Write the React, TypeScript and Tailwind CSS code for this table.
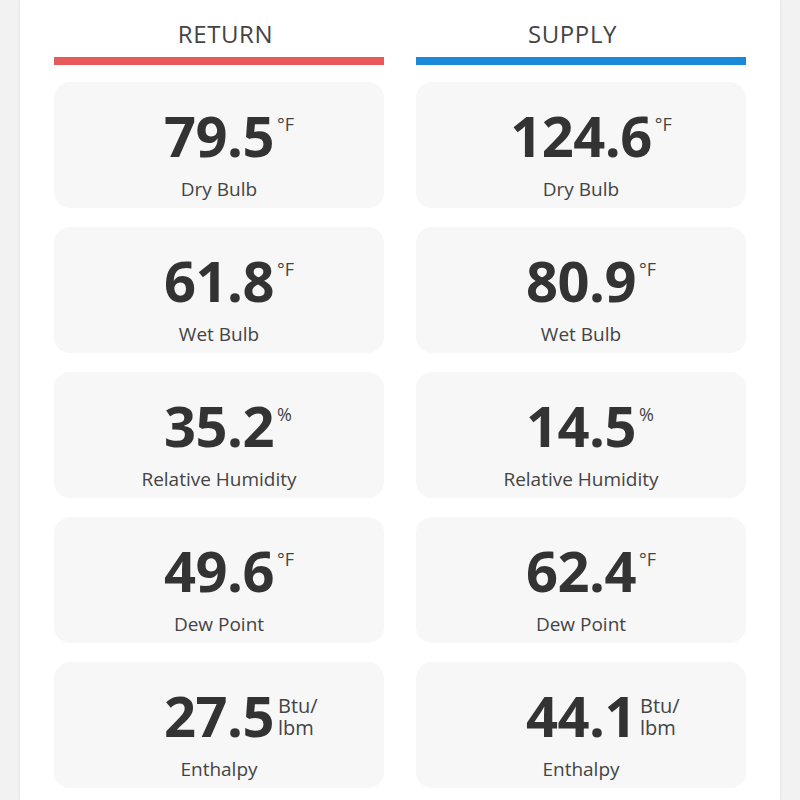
import React from 'react';

type Reading = { value: string; unit: string[]; label: string };

const RETURN: Reading[] = [
  { value: '79.5', unit: ['°F'], label: 'Dry Bulb' },
  { value: '61.8', unit: ['°F'], label: 'Wet Bulb' },
  { value: '35.2', unit: ['%'], label: 'Relative Humidity' },
  { value: '49.6', unit: ['°F'], label: 'Dew Point' },
  { value: '27.5', unit: ['Btu/', 'lbm'], label: 'Enthalpy' },
];

const SUPPLY: Reading[] = [
  { value: '124.6', unit: ['°F'], label: 'Dry Bulb' },
  { value: '80.9', unit: ['°F'], label: 'Wet Bulb' },
  { value: '14.5', unit: ['%'], label: 'Relative Humidity' },
  { value: '62.4', unit: ['°F'], label: 'Dew Point' },
  { value: '44.1', unit: ['Btu/', 'lbm'], label: 'Enthalpy' },
];

function Card({ r }: { r: Reading }) {
  const stacked = r.unit.length > 1;
  return (
    <div className="h-[126px] rounded-2xl bg-[#f7f7f7] pt-[25px] flex flex-col items-center">
      <div className="relative h-[56px] text-[56px] leading-none font-bold text-[#333] tracking-[-0.5px]">
        {r.value}
        <div
          className={
            stacked
              ? 'absolute left-full top-[8px] ml-[4px] text-[20px] leading-[22px] font-normal text-[#444] tracking-normal'
              : 'absolute left-full top-[6px] ml-[3px] text-[18px] leading-[22px] font-normal text-[#444] tracking-normal'
          }
        >
          {stacked ? (
            <>
              {r.unit[0]}
              <br />
              {r.unit[1]}
            </>
          ) : (
            r.unit[0]
          )}
        </div>
      </div>
      <div className="mt-[14px] text-[19px] leading-[24px] text-[#444]">{r.label}</div>
    </div>
  );
}

function Column({ title, bar, items, shift }: { title: string; bar: string; items: Reading[]; shift: string }) {
  return (
    <div className="flex flex-col">
      <div className={`h-[57px] pt-[19px] text-center text-[24px] leading-[30px] text-[#444] tracking-[0.6px] ${shift}`}>{title}</div>
      <div className={`h-[8px] ${bar}`} />
      <div className="mt-[17px] flex flex-col gap-[19px]">
        {items.map((r) => (
          <Card key={r.label} r={r} />
        ))}
      </div>
    </div>
  );
}

export default function App() {
  return (
    <div className="h-[800px] overflow-hidden bg-[#f2f2f2] px-[20px]" style={{ fontFamily: '"Open Sans", "Liberation Sans", sans-serif' }}>
      <div className="h-full bg-white shadow-[0_0_4px_rgba(0,0,0,0.08)] pl-[34px] pr-[34px]">
        <div className="grid grid-cols-2 gap-[32px]">
          <Column title="RETURN" bar="bg-[#e85a5a]" items={RETURN} shift="pl-[13px]" />
          <Column title="SUPPLY" bar="bg-[#1a8ad8]" items={SUPPLY} shift="pr-[17px]" />
        </div>
      </div>
    </div>
  );
}
